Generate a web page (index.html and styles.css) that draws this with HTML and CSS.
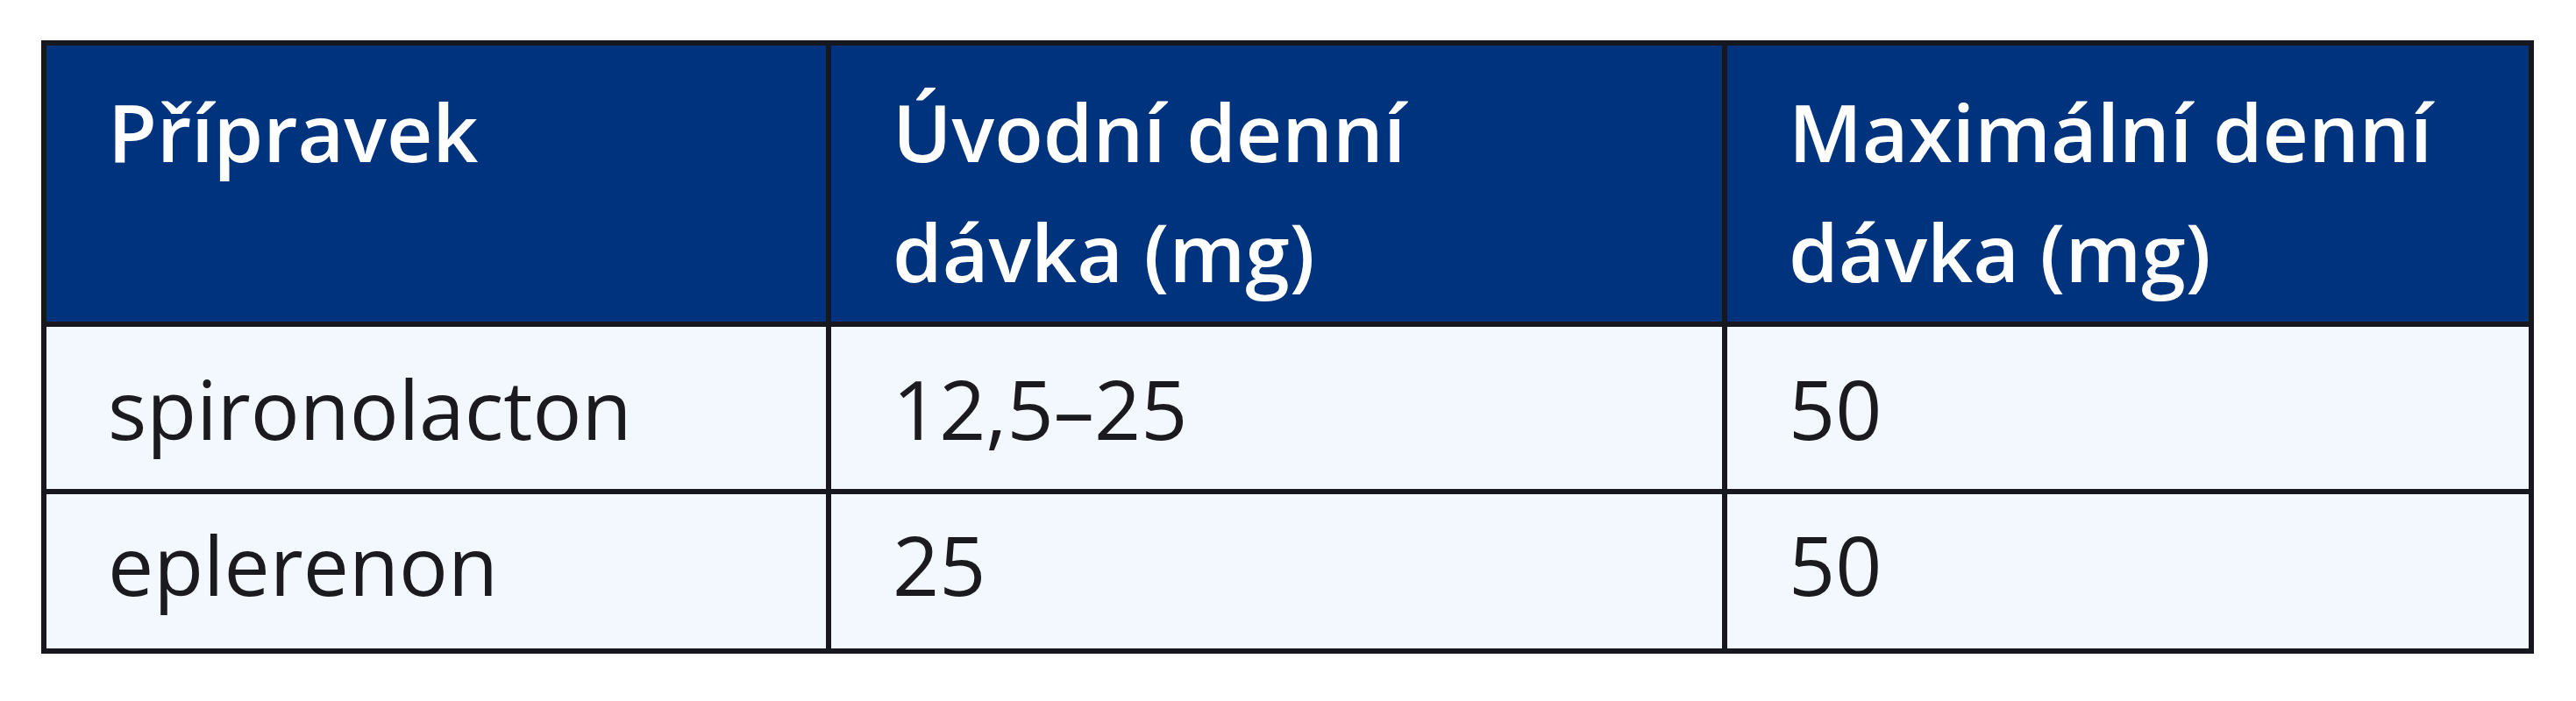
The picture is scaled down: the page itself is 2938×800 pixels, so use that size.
FILE: index.html
```html
<!DOCTYPE html>
<html lang="cs">
<head>
<meta charset="utf-8">
<title>Dávkování</title>
<link rel="stylesheet" href="styles.css">
</head>
<body>
<div class="page">
  <table class="dose-table">
    <colgroup>
      <col class="c1">
      <col class="c2">
      <col class="c3">
    </colgroup>
    <thead>
      <tr>
        <th>Přípravek</th>
        <th>Úvodní denní<br>dávka (mg)</th>
        <th>Maximální denní<br>dávka (mg)</th>
      </tr>
    </thead>
    <tbody>
      <tr class="r1">
        <td>spironolacton</td>
        <td>12,5–25</td>
        <td>50</td>
      </tr>
      <tr class="r2">
        <td>eplerenon</td>
        <td>25</td>
        <td>50</td>
      </tr>
    </tbody>
  </table>
</div>
</body>
</html>
```

FILE: styles.css
```css
html, body {
  margin: 0;
  padding: 0;
  background: #ffffff;
}

.page {
  padding: 46px 0 0 47px;
}

.dose-table {
  border-collapse: collapse;
  table-layout: fixed;
  width: 2837px;
  font-family: "Open Sans", "Liberation Sans", sans-serif;
}

.c1 { width: 895px; }
.c2 { width: 1022px; }
.c3 { width: 920px; }

.dose-table th,
.dose-table td {
  border: 6px solid #17171f;
  text-align: left;
  vertical-align: top;
  padding: 0 0 0 70px;
  box-sizing: border-box;
}

.dose-table th {
  background: #00337d;
  color: #ffffff;
  font-size: 91px;
  font-weight: 600;
  line-height: 137px;
  height: 321px;
  padding-top: 30px;
}

.dose-table td {
  background: #f3f8fe;
  color: #1b1b1f;
  font-size: 93px;
  font-weight: 400;
  line-height: 134px;
}

.r1 td {
  height: 191px;
  padding-top: 26px;
}

.r2 td {
  height: 182px;
  padding-top: 13px;
}
```
